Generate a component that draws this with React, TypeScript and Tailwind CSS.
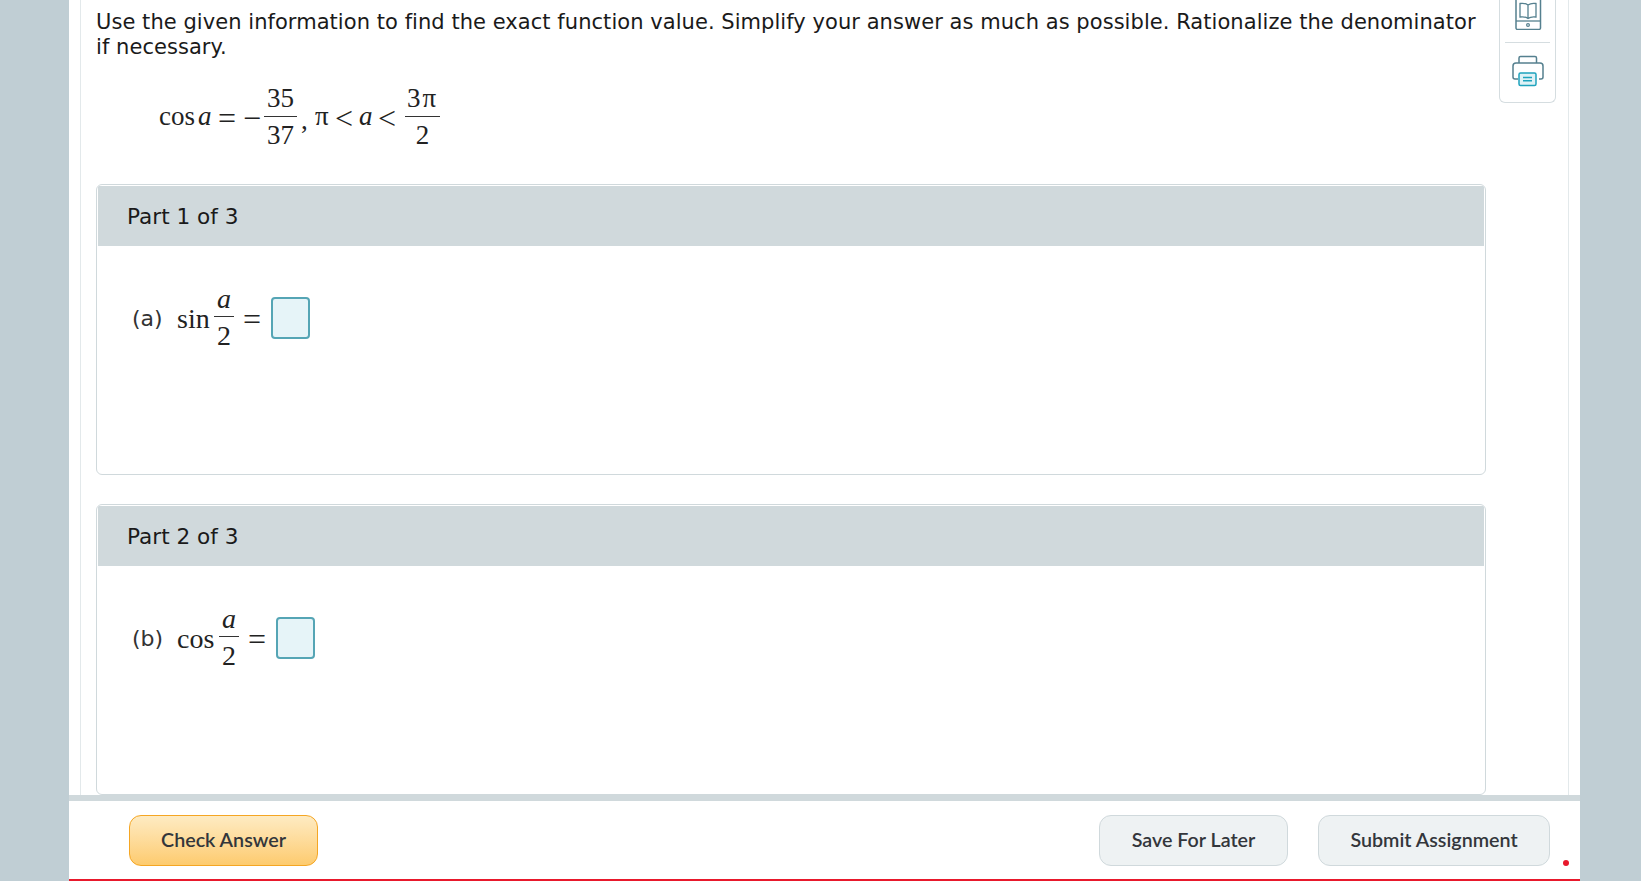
import React from "react";

const serif = "font-['Liberation_Serif',serif]";

function Frac({ top, bottom, w, italic, className = "" }: { top: React.ReactNode; bottom: React.ReactNode; w: string; italic?: boolean; className?: string }) {
  return (
    <span className={`inline-flex flex-col items-center ${w} ${className}`}>
      <span className={`h-[35px] leading-[35px] ${italic ? "italic" : ""}`}>{top}</span>
      <span className="h-px w-full bg-[#333]" />
      <span className="h-[35px] leading-[37px]">{bottom}</span>
    </span>
  );
}

function Sym({ c, className }: { c: string; className: string }) {
  return <span className={`text-[32px] leading-none ${className}`}>{c}</span>;
}

function Part({ title, label, fn, fnW }: { title: string; label: string; fn: string; fnW: string }) {
  return (
    <section className="mr-[68px] h-[291px] shrink-0 overflow-hidden rounded-[6px] border border-[#d0d9dc] bg-white p-px">
      <div className="flex h-[60px] items-center bg-[#d0d9dc] pl-[29px] pt-[3px] text-[21.6px] text-[#1a1a1a]">{title}</div>
      <div className="box-content flex h-[73px] items-center pl-[34px] pt-[36px]">
        <span className="w-[45px] shrink-0 text-[22px] text-[#333]">{label}</span>
        <span className={`${serif} flex items-center text-[28px] text-[#222]`}>
          <span className={`${fnW} shrink-0`}>{fn}</span>
          <Frac top="a" bottom="2" italic w="w-[20px]" className="mb-[4px]" />
          <Sym c="=" className="ml-[9px] mr-[10px]" />
        </span>
        <span className="mb-[2px] h-[42px] w-[39px] rounded-[4px] border-2 border-[#55a5b5] bg-[#e6f4f8]" />
      </div>
    </section>
  );
}

export default function App() {
  return (
    <div className="flex h-[881px] w-full overflow-hidden bg-[#c0ced4] pl-[69px] font-['DejaVu_Sans',sans-serif]">
      <main className="flex h-full w-[1511px] flex-col bg-white">
        <div className="relative mx-[11px] min-h-0 flex-1 overflow-hidden border-x border-x-[#e3e9eb] pl-[15px] pr-[14px] text-[#1a1a1a]">
          <p className="mr-[60px] pt-[10px] text-[21px] leading-[25px] tracking-[0.05px]">
            Use the given information to find the exact function value. Simplify your answer as much as possible. Rationalize the denominator if necessary.
          </p>
          <div className={`${serif} mb-[32px] ml-[63px] mt-[21px] flex h-[71px] items-center text-[27px] text-[#222]`}>
            <span className="w-[39px]">cos</span>
            <i className="w-[20px]">a</i>
            <Sym c="=" className="w-[25px] pt-[2px]" />
            <Sym c="−" className="w-[21px] pt-[2px]" />
            <Frac top="35" bottom="37" w="w-[33px]" />
            <span className="ml-[4px] w-[14px] pt-[8px]">,</span>
            <span className="w-[20px]">π</span>
            <Sym c="<" className="w-[24px] pt-[2px]" />
            <i className="w-[19px]">a</i>
            <Sym c="<" className="w-[27px] pt-[2px]" />
            <Frac top={<span className="tracking-[2px]">3π</span>} bottom="2" w="w-[35px]" />
          </div>
          <div className="flex flex-col gap-[29px]">
            <Part title="Part 1 of 3" label="(a)" fn="sin" fnW="w-[37px]" />
            <Part title="Part 2 of 3" label="(b)" fn="cos" fnW="w-[42px]" />
          </div>
          <aside className="absolute right-[12px] top-0 flex h-[103px] w-[57px] flex-col items-center rounded-b-[6px] border border-t-0 border-[#d5dde0] bg-white">
            <svg width="28" height="30" viewBox="0 0 28 30" fill="none" className="shrink-0">
              <path d="M2 0V28a1.5 1.5 0 0 0 1.5 1.5H25a1.5 1.5 0 0 0 1.5-1.500V0" stroke="#55808f" strokeWidth="1.5" />
              <path d="M2 21H26.5" stroke="#55808f" strokeWidth="1.3" />
              <circle cx="14" cy="25" r="1.4" stroke="#55808f" strokeWidth="1.2" />
              <path d="M14 5C12 3.5 9 3 6 3.500V17C9 16.600 12 17 14 18.500C16 17 19 16.600 22 17V3.500C19 3 16 3.500 14 5ZM14 5V18.500" stroke="#55808f" strokeWidth="1.3" />
            </svg>
            <div className="mt-[12px] h-px w-[45px] bg-[#d5dde0]" />
            <svg width="32" height="32" viewBox="0 0 32 32" fill="none" className="mt-[12px] shrink-0">
              <path d="M7 8V3a1.5 1.5 0 0 1 1.500-1.500H23a1.500 1.500 0 0 1 1.500 1.500V8" stroke="#55808f" strokeWidth="1.500" />
              <path d="M6 24H3a2 2 0 0 1-2-2V11a3 3 0 0 1 3-3H28a3 3 0 0 1 3 3V22a2 2 0 0 1-2 2H27" stroke="#55808f" strokeWidth="1.500" />
              <rect x="7" y="18" width="17" height="12.500" rx="1.500" fill="#dff2f6" stroke="#1fa3bd" strokeWidth="1.500" />
              <path d="M11 22.500H20M11 25.800H20" stroke="#1fa3bd" strokeWidth="1.400" />
            </svg>
          </aside>
        </div>
        <footer className="relative flex h-[86px] shrink-0 items-start justify-between border-y-[6px] border-b-2 border-y-[#d0d9dc] border-b-[#e8192c] bg-white pl-[60px] pr-[30px] pt-[14px] font-['Lato',sans-serif] text-[19.7px] font-semibold text-[#33363b]">
          <button className="h-[51px] w-[189px] rounded-[12px] border border-[#f5a623] bg-gradient-to-b from-[#feebc2] to-[#fdcb6e] pb-[2px]">Check Answer</button>
          <div className="flex gap-[30px]">
            <button className="h-[51px] w-[189px] rounded-[12px] border border-[#d0d9dc] bg-[#eef2f3] pb-[2px]">Save For Later</button>
            <button className="h-[51px] w-[232px] rounded-[12px] border border-[#d0d9dc] bg-[#eef2f3] pb-[2px]">Submit Assignment</button>
          </div>
          <span className="absolute bottom-[13px] right-[11px] size-[6px] rounded-full bg-[#e8192c]" />
        </footer>
      </main>
    </div>
  );
}
